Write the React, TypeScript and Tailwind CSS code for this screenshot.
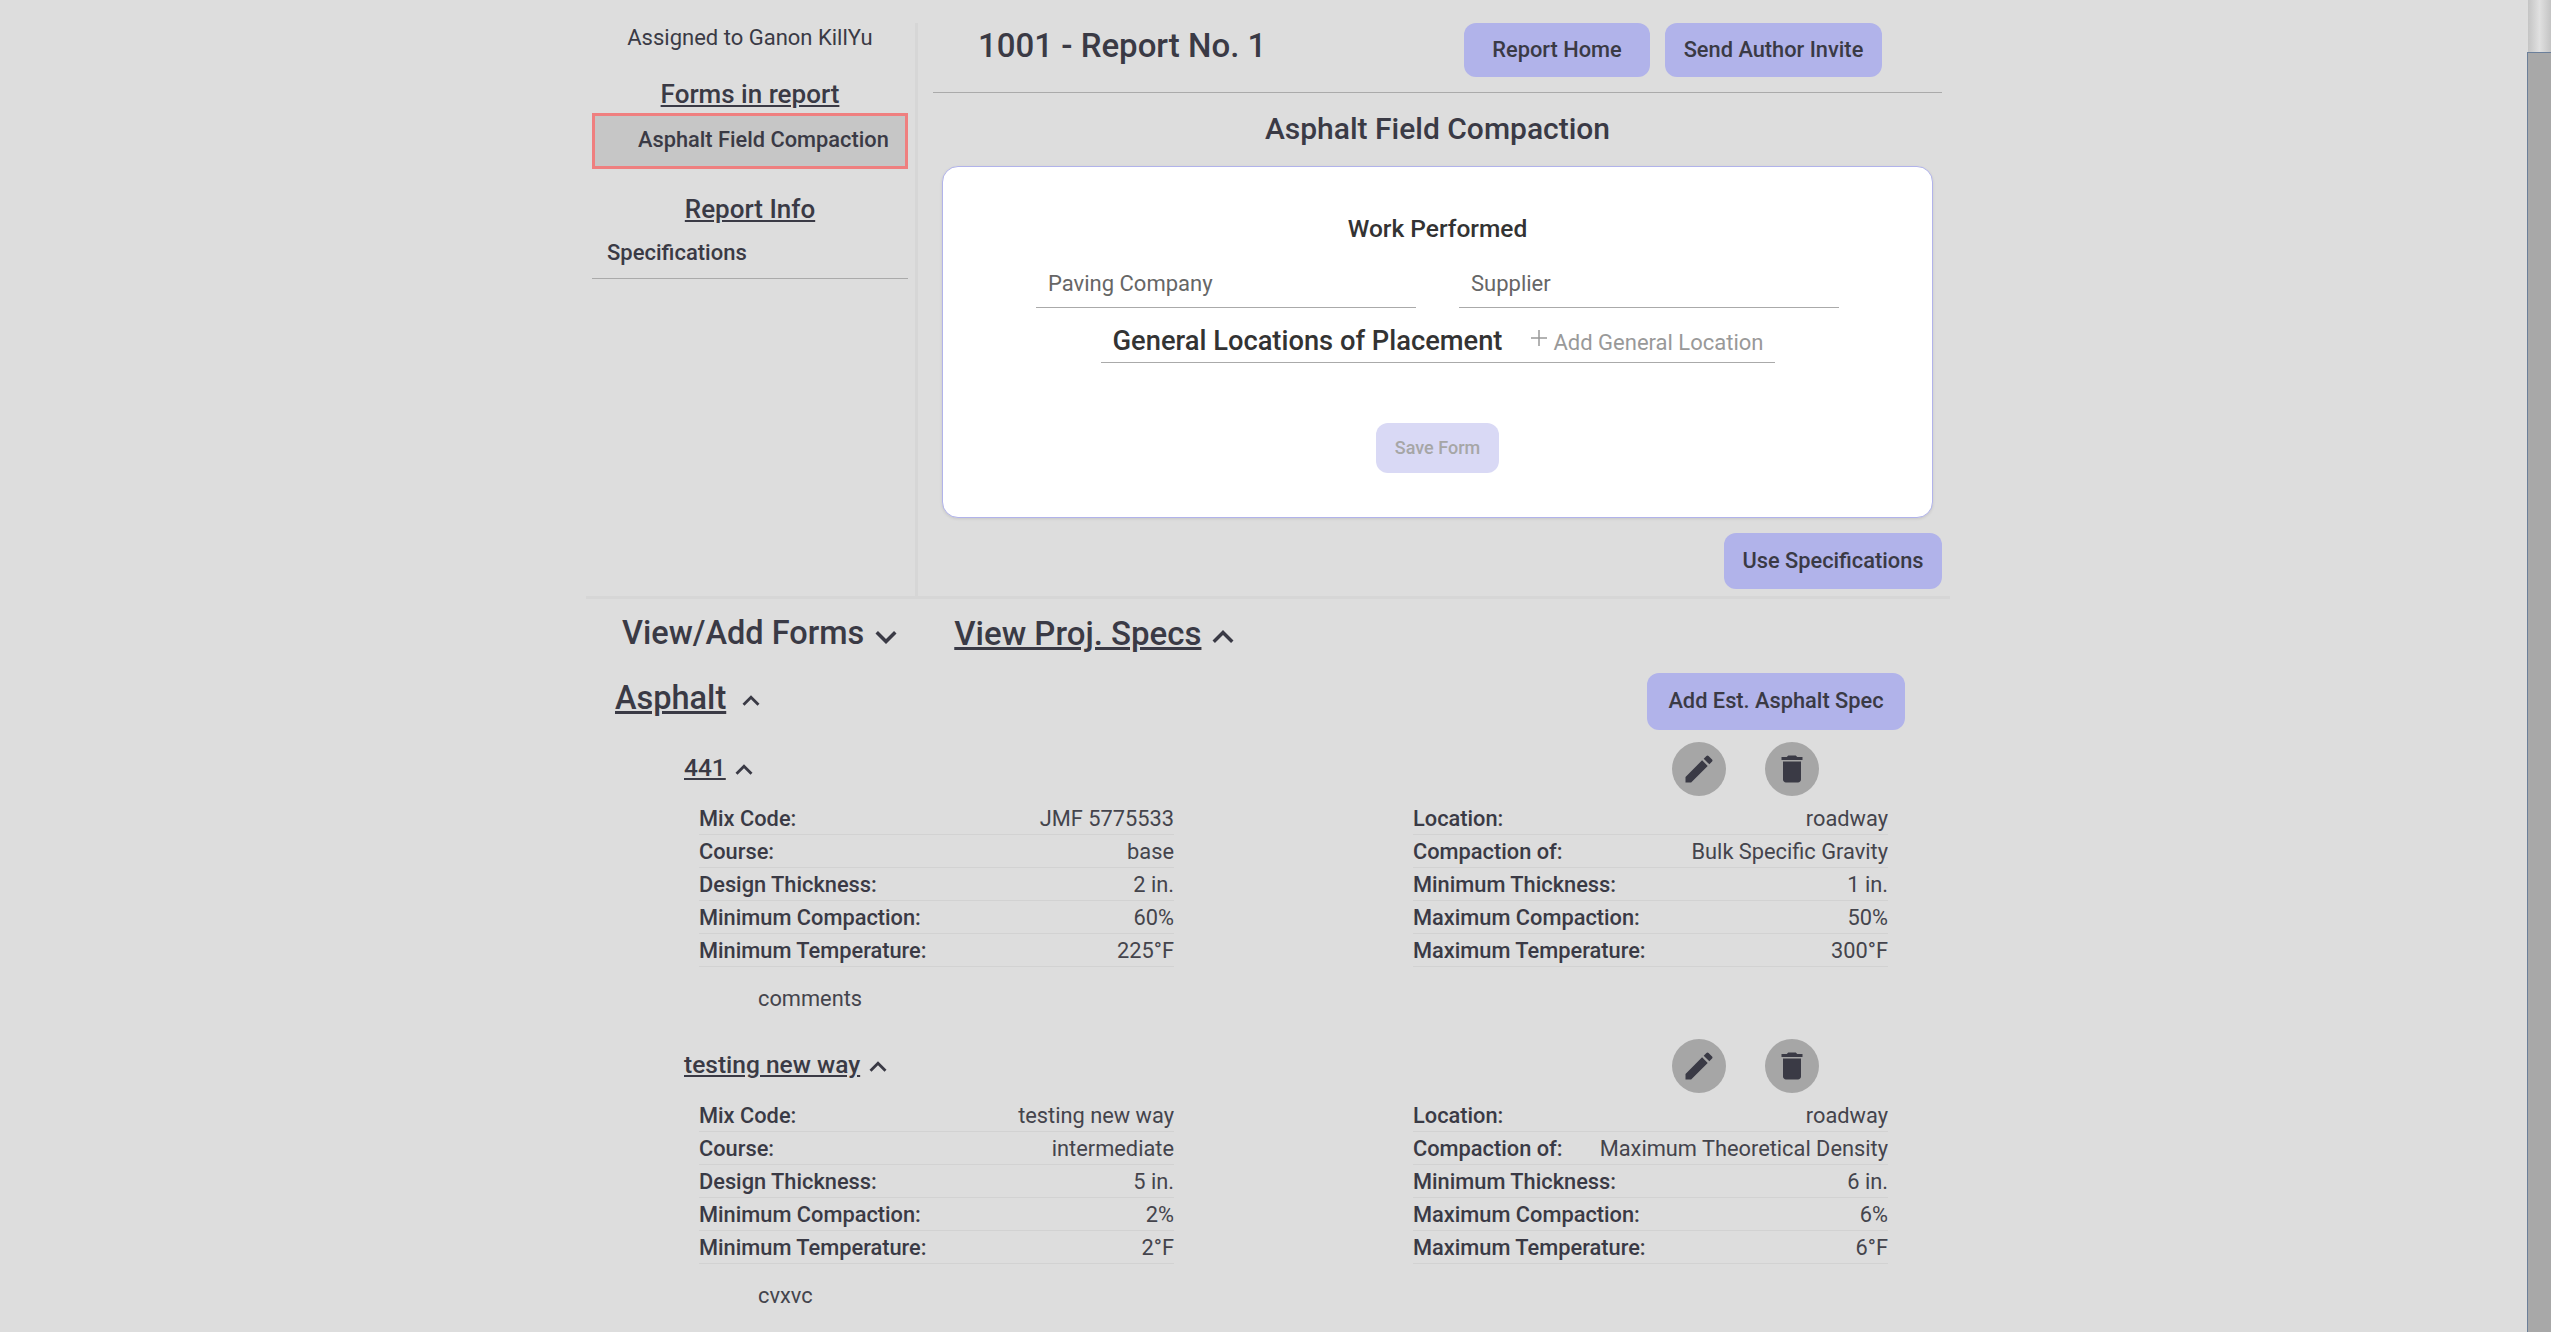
import { ReactNode } from 'react';

const chevronUp = 'm12 8-6 6 1.41 1.41L12 10.83l4.59 4.58L18 14z';
const chevronDown = 'M16.59 8.59 12 13.17 7.41 8.59 6 10l6 6 6-6z';

function Chevron({ up, className }: { up?: boolean; className: string }) {
    return (
        <svg viewBox="0 0 24 24" className={className} fill="currentColor">
            <path d={up ? chevronUp : chevronDown} />
        </svg>
    );
}

function PurpleButton({ children, className }: { children: ReactNode; className: string }) {
    return (
        <button className={`flex items-center justify-center rounded-[12px] bg-[#b1b3ea] text-[21.8px] font-medium text-[#3a3a45] ${className}`}>
            {children}
        </button>
    );
}

function IconCircle({ d }: { d: string }) {
    return (
        <div className="flex h-[54px] w-[54px] items-center justify-center rounded-full bg-[#a6a6a6]">
            <svg viewBox="0 0 24 24" className="h-[36px] w-[36px] text-[#3a3a45]" fill="currentColor">
                <path d={d} />
            </svg>
        </div>
    );
}

function SpecRow({ label, value }: { label: string; value: string }) {
    return (
        <div className="flex h-[33px] items-center justify-between border-b border-[#d2d2d2] pt-[1px] text-[21.8px] leading-none">
            <span className="font-medium">{label}</span>
            <span className="text-[#44444c]">{value}</span>
        </div>
    );
}

type Spec = {
    name: string;
    left: [string, string][];
    right: [string, string][];
    comment: string;
};

const specs: Spec[] = [
    {
        name: '441',
        left: [['Mix Code:', 'JMF 5775533'], ['Course:', 'base'], ['Design Thickness:', '2 in.'], ['Minimum Compaction:', '60%'], ['Minimum Temperature:', '225°F']],
        right: [['Location:', 'roadway'], ['Compaction of:', 'Bulk Specific Gravity'], ['Minimum Thickness:', '1 in.'], ['Maximum Compaction:', '50%'], ['Maximum Temperature:', '300°F']],
        comment: 'comments',
    },
    {
        name: 'testing new way',
        left: [['Mix Code:', 'testing new way'], ['Course:', 'intermediate'], ['Design Thickness:', '5 in.'], ['Minimum Compaction:', '2%'], ['Minimum Temperature:', '2°F']],
        right: [['Location:', 'roadway'], ['Compaction of:', 'Maximum Theoretical Density'], ['Minimum Thickness:', '6 in.'], ['Maximum Compaction:', '6%'], ['Maximum Temperature:', '6°F']],
        comment: 'cvxvc',
    },
];

function SpecBlock({ spec }: { spec: Spec }) {
    return (
        <div className="h-[297px]">
            <div className="flex h-[54px] items-center pl-[98px]">
                <span className="text-[24.5px] font-medium underline">{spec.name}</span>
                <Chevron up className="ml-[1px] mt-[3px] h-[34px] w-[34px]" />
                <div className="ml-auto mr-[131px] mt-[2px] flex gap-[39px]">
                    <IconCircle d="M3 17.25V21h3.75L17.81 9.94l-3.75-3.75L3 17.25zM20.71 7.04c.39-.39.39-1.02 0-1.41l-2.34-2.34a.9959.9959 0 0 0-1.41 0l-1.83 1.83 3.75 3.75 1.83-1.83z" />
                    <IconCircle d="M6 19c0 1.1.9 2 2 2h8c1.1 0 2-.9 2-2V7H6v12zM19 4h-3.5l-1-1h-5l-1 1H5v2h14V4z" />
                </div>
            </div>
            <div className="mt-[7px] flex gap-[239px] pl-[113px]">
                <div className="w-[475px]">
                    {spec.left.map(([label, value]) => <SpecRow key={label} label={label} value={value} />)}
                </div>
                <div className="w-[475px]">
                    {spec.right.map(([label, value]) => <SpecRow key={label} label={label} value={value} />)}
                </div>
            </div>
            <div className="mt-[20px] pl-[172px] text-[21.8px] leading-[24px] text-[#44444c]">{spec.comment}</div>
        </div>
    );
}

export default function App() {
    return (
        <div className="flex h-screen overflow-hidden bg-[#dddddd] font-['Roboto',sans-serif] text-[#3a3a45]">
            <div className="min-w-0 flex-1">
                <div className="ml-[586px] w-[1364px]">
                    {/* Report + form */}
                    <div className="flex h-[596px] pt-[23px]">
                        <div className="w-[332px] border-r-[3px] border-[#d6d6d6] pl-[6px] pr-[7px]">
                            <div className="text-center text-[22px] leading-[30px]">Assigned to Ganon KillYu</div>
                            <div className="mt-[26px] text-center text-[26px] font-medium leading-[30px] underline">Forms in report</div>
                            <div className="mt-[4px] flex h-[56px] items-center border-[3px] border-[#ef7f7f] bg-[#c6c6c6] pb-[2px] pl-[43px] text-[21.8px] font-medium">
                                Asphalt Field Compaction
                            </div>
                            <div className="mt-[25px] text-center text-[26px] font-medium leading-[30px] underline">Report Info</div>
                            <div className="mt-[16px] border-b border-[#aaaaaa] pb-[12px] pl-[15px] text-[22px] font-medium leading-[26px]">Specifications</div>
                        </div>
                        <div className="flex-1 pl-[15px] pr-[8px]">
                            <div className="flex h-[70px] items-start border-b border-[#aaaaaa]">
                                <div className="ml-[45px] pt-[1px] text-[33px] font-medium leading-[44px]">1001 - Report No. 1</div>
                                <div className="ml-auto mr-[60px] flex gap-[15px]">
                                    <PurpleButton className="h-[54px] w-[186px]">Report Home</PurpleButton>
                                    <PurpleButton className="h-[54px] w-[217px]">Send Author Invite</PurpleButton>
                                </div>
                            </div>
                            <div className="mt-[14px] text-center text-[30px] font-medium leading-[44px]">Asphalt Field Compaction</div>
                            <div className="mx-[9px] mt-[15px] flex h-[352px] flex-col items-center rounded-[16px] border border-[#b1b3ea] bg-white pt-[46px] shadow-[0_1px_3px_rgba(0,0,0,0.1)]">
                                <div className="text-[24.5px] font-medium leading-[32px] text-[#333333]">Work Performed</div>
                                <div className="mt-[21px] flex gap-[43px]">
                                    <div className="h-[42px] w-[380px] border-b border-[#aaaaaa] pl-[12px] text-[22px] leading-[36px] text-[#666666]">Paving Company</div>
                                    <div className="h-[42px] w-[380px] border-b border-[#aaaaaa] pl-[12px] text-[22px] leading-[36px] text-[#666666]">Supplier</div>
                                </div>
                                <div className="flex h-[55px] w-[674px] items-end border-b border-[#aaaaaa] pl-[12px]">
                                    <span className="text-[27.3px] font-medium leading-[42px] text-[#333333]">General Locations of Placement</span>
                                    <svg viewBox="0 0 16 16" className="mb-[16px] ml-[29px] h-[16px] w-[16px] text-[#999999]" fill="none" stroke="currentColor" strokeWidth="1.5">
                                        <path d="M8 0v16M0 8h16" />
                                    </svg>
                                    <span className="mb-[2px] ml-[6px] text-[22px] leading-[34px] text-[#999999]">Add General Location</span>
                                </div>
                                <button className="mt-[60px] h-[50px] w-[123px] rounded-[12px] bg-[#d9d9f5] pb-[2px] text-[18px] font-medium text-[#a6a6a6]">Save Form</button>
                            </div>
                            <div className="mt-[15px] flex justify-end">
                                <PurpleButton className="h-[56px] w-[218px]">Use Specifications</PurpleButton>
                            </div>
                        </div>
                    </div>

                    <div className="h-[3px] bg-[#d6d6d6]" />

                    {/* Tabs */}
                    <div className="flex h-[60px] items-center pl-[36px] pt-[9px]">
                        <span className="text-[32.5px] font-medium">View/Add Forms</span>
                        <Chevron className="ml-[1px] mt-[6px] h-[42px] w-[42px]" />
                        <span className="ml-[47px] text-[33px] font-medium underline">View Proj. Specs</span>
                        <Chevron up className="ml-[1px] mt-[6px] h-[42px] w-[42px]" />
                    </div>

                    {/* Asphalt section */}
                    <div className="mt-[6px] flex h-[72px] items-center pl-[29px] pr-[45px]">
                        <span className="mb-[6px] text-[32.5px] font-medium underline">Asphalt</span>
                        <Chevron up className="ml-[8px] h-[34px] w-[34px]" />
                        <PurpleButton className="ml-auto h-[57px] w-[258px]">Add Est. Asphalt Spec</PurpleButton>
                    </div>
                    <div className="pt-[4px]">
                        {specs.map((spec) => <SpecBlock key={spec.name} spec={spec} />)}
                    </div>
                </div>
            </div>

            {/* Scrollbar */}
            <div className="flex w-[23px] flex-col bg-gradient-to-r from-[#c4c4c4] via-[#e0e0e0] to-[#c4c4c4]">
                <div className="h-[52px]" />
                <div className="-ml-[1px] flex-1 border-l border-t border-[#6b7f9a] bg-[#a8a8a8]" />
            </div>
        </div>
    );
}
